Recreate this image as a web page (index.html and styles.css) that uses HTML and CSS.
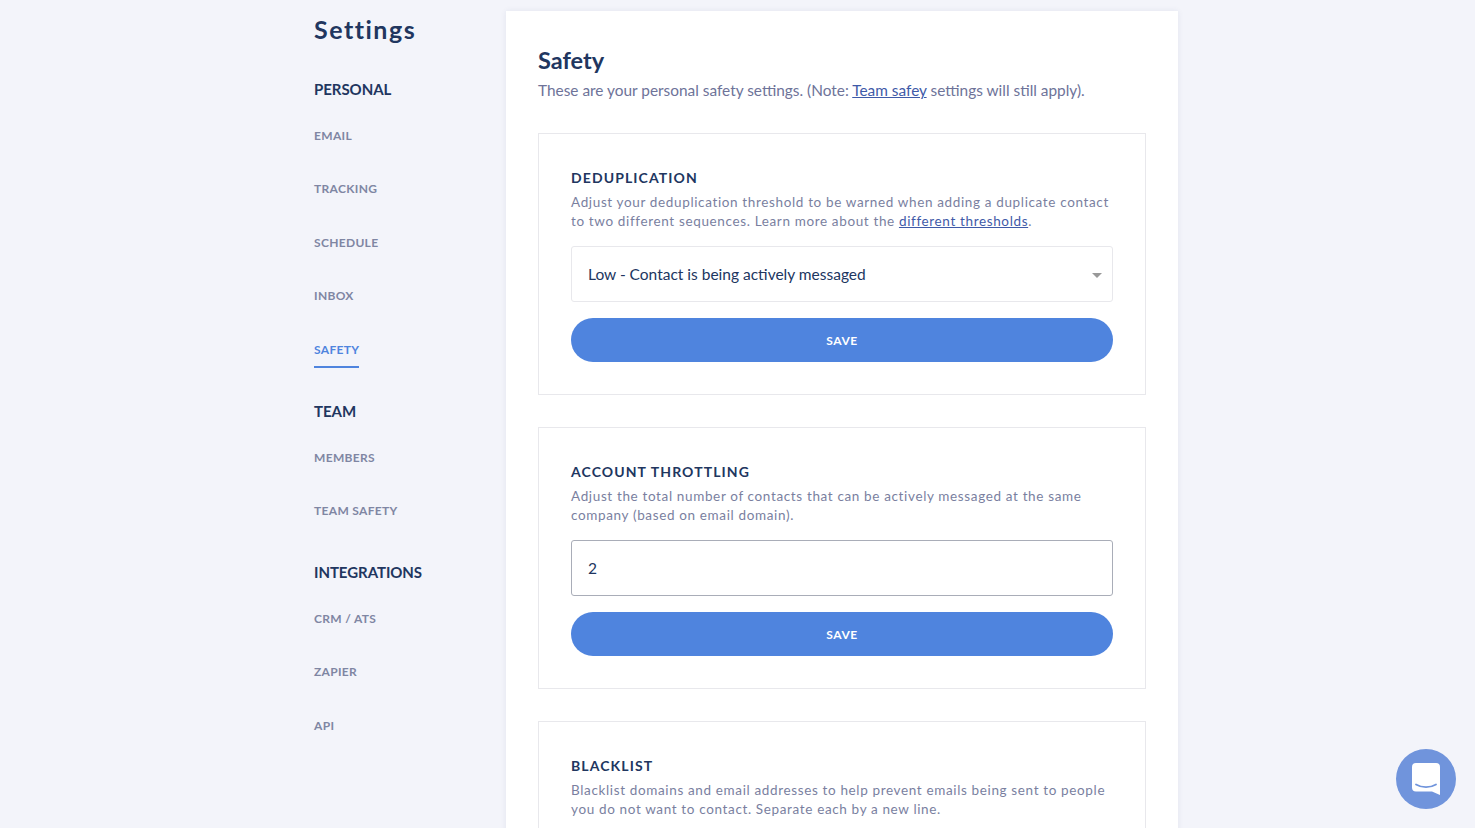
FILE: index.html
```html
<!DOCTYPE html>
<html lang="en">
<head>
<meta charset="utf-8">
<title>Settings</title>
<link rel="stylesheet" href="styles.css">
</head>
<body>
<div class="page">
  <aside class="sidebar">
    <h1 class="side-title">Settings</h1>
    <h2 class="group">PERSONAL</h2>
    <nav class="nav">
      <a class="nav-item">EMAIL</a>
      <a class="nav-item">TRACKING</a>
      <a class="nav-item">SCHEDULE</a>
      <a class="nav-item">INBOX</a>
      <a class="nav-item active">SAFETY</a>
    </nav>
    <h2 class="group">TEAM</h2>
    <nav class="nav">
      <a class="nav-item">MEMBERS</a>
      <a class="nav-item">TEAM SAFETY</a>
    </nav>
    <h2 class="group">INTEGRATIONS</h2>
    <nav class="nav">
      <a class="nav-item">CRM / ATS</a>
      <a class="nav-item">ZAPIER</a>
      <a class="nav-item">API</a>
    </nav>
  </aside>
  <main class="main">
    <h1 class="main-title">Safety</h1>
    <p class="main-sub">These are your personal safety settings. (Note: <a class="link">Team safey</a> settings will still apply).</p>

    <section class="box">
      <h3 class="box-title">DEDUPLICATION</h3>
      <p class="box-text">Adjust your deduplication threshold to be warned when adding a duplicate contact to two different sequences. Learn more about the <a class="link">different thresholds</a>.</p>
      <div class="field select"><span>Low - Contact is being actively messaged</span><i class="caret"></i></div>
      <button class="save">SAVE</button>
    </section>

    <section class="box">
      <h3 class="box-title">ACCOUNT THROTTLING</h3>
      <p class="box-text">Adjust the total number of contacts that can be actively messaged at the same company (based on email domain).</p>
      <div class="field number"><span>2</span></div>
      <button class="save">SAVE</button>
    </section>

    <section class="box">
      <h3 class="box-title">BLACKLIST</h3>
      <p class="box-text">Blacklist domains and email addresses to help prevent emails being sent to people you do not want to contact. Separate each by a new line.</p>
    </section>
  </main>
</div>
<div class="chat">
  <svg width="28" height="32" viewBox="0 0 28 32" aria-hidden="true">
    <path d="M4 0H24A4 4 0 0 1 28 4V32L20 28.500H4A4 4 0 0 1 0 24.500V4A4 4 0 0 1 4 0Z" fill="#fff"/>
    <path d="M4 21.500C10 25 18 25 24 21.500" fill="none" stroke="#7094dc" stroke-width="1.800" stroke-linecap="round"/>
  </svg>
</div>
</body>
</html>
```
FILE: styles.css
```css
* { box-sizing: border-box; }
html, body { margin: 0; height: 828px; overflow: hidden; }
body {
  background: #f3f4fa;
  font-family: "Lato", "Open Sans", sans-serif;
  color: #21365f;
}
.page { display: flex; align-items: flex-start; padding: 11px 0 0 314px; }
.sidebar { width: 192px; flex: none; }
.side-title {
  margin: 2px 0 34px;
  font-size: 25px;
  line-height: 32px;
  font-weight: 700;
  letter-spacing: 1.5px;
  color: #21365f;
}
.group {
  margin: 0;
  font-size: 15px;
  line-height: 20px;
  font-weight: 700;
  letter-spacing: -.05px;
  color: #21365f;
}
.nav { display: flex; flex-direction: column; align-items: flex-start; margin-bottom: 33px; padding-top: 27px; }
.nav-item {
  font-size: 12px;
  line-height: 20px;
  font-weight: 700;
  letter-spacing: .32px;
  color: #7f86a3;
  padding-bottom: 6px;
  margin-bottom: 25px;
  border-bottom: 2px solid transparent;
}
.nav-item:nth-child(even) { margin-bottom: 26px; }
.nav-item:last-child { margin-bottom: 0; }
.nav-item.active { color: #4f84de; border-bottom-color: #4f84de; }
.main {
  width: 672px;
  flex: none;
  background: #fff;
  padding: 32px 32px 0;
  box-shadow: 0 0 6px rgba(40, 50, 100, .08);
}
.main-title { margin: 2px 0 0; font-size: 23.500px; line-height: 30px; font-weight: 700; color: #21365f; }
.main-sub { margin: 2px 0 30px; font-size: 15.400px; line-height: 26px; color: #6e7399; }
.link { color: #3f5aa8; text-decoration: underline; }
.box { border: 1px solid #e8e8ec; padding: 32px; margin-bottom: 32px; }
.box-title { margin: 0; font-size: 14px; line-height: 24px; font-weight: 700; letter-spacing: 1.100px; color: #21365f; }
.box-text { margin: 3px 0 15px; font-size: 13.500px; line-height: 19px; letter-spacing: .64px; color: #7a7f9f; }
.field {
  height: 56px;
  display: flex;
  align-items: center;
  justify-content: space-between;
  padding: 0 10px 0 16px;
  font-size: 15.500px;
  color: #21365f;
  background: #fff;
  border-radius: 3px;
}
.select { border: 1px solid #e8e8ec; }
.number { border: 1px solid #a9adb8; }
.caret { width: 0; height: 0; margin-top: 2px; border: 5px solid transparent; border-top-color: #999; border-bottom: 0; }
.save {
  display: block;
  width: 100%;
  height: 44px;
  margin-top: 16px;
  border: 0;
  border-radius: 22px;
  background: #4f84de;
  color: #fff;
  font: 700 12px "Lato", sans-serif;
  letter-spacing: .6px;
}
.chat {
  position: fixed;
  left: 1396px;
  top: 749px;
  width: 60px;
  height: 60px;
  border-radius: 50%;
  background: #7094dc;
  display: flex;
  align-items: center;
  justify-content: center;
}
```
